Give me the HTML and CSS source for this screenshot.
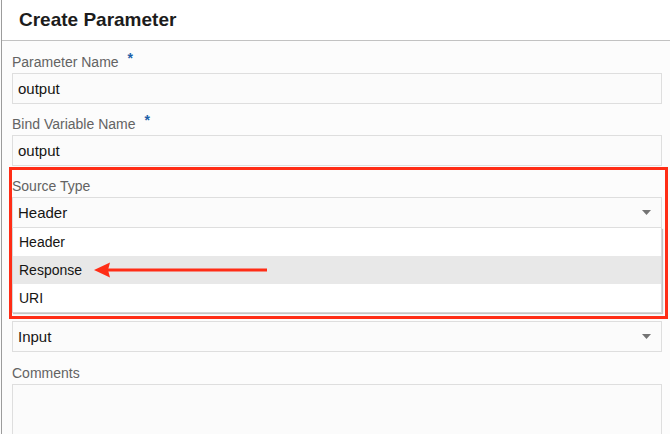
FILE: index.html
```html
<!DOCTYPE html>
<html>
<head>
<meta charset="utf-8">
<link rel="stylesheet" href="styles.css">
</head>
<body>
<div class="dialog">
  <div class="header"><h1 class="title">Create Parameter</h1></div>
  <div class="form">
    <div class="field">
      <div class="label">Parameter Name<span class="req">*</span></div>
      <div class="input">output</div>
    </div>
    <div class="field">
      <div class="label">Bind Variable Name<span class="req">*</span></div>
      <div class="input">output</div>
    </div>
    <div class="field field-open">
      <div class="label">Source Type</div>
      <div class="input select">
        <span>Header</span>
        <svg class="caret" width="9" height="5" viewBox="0 0 9 5"><polygon points="0,0 9,0 4.5,5" fill="#747474"/></svg>
      </div>
      <ul class="listbox">
        <li class="option">Header</li>
        <li class="option option-active">Response</li>
        <li class="option">URI</li>
      </ul>
    </div>
    <div class="field field-after">
      <div class="input select">
        <span>Input</span>
        <svg class="caret" width="9" height="5" viewBox="0 0 9 5"><polygon points="0,0 9,0 4.5,5" fill="#747474"/></svg>
      </div>
    </div>
    <div class="field">
      <div class="label">Comments</div>
      <div class="input textarea"></div>
    </div>
  </div>
  <div class="highlight"></div>
  <svg class="arrow" width="190" height="24" viewBox="0 0 190 24">
    <line x1="16" y1="10" x2="177" y2="10" stroke="#ff2d16" stroke-width="3"/>
    <polygon points="4,10 20,2.5 18,10 20,17.5" fill="#ff2d16"/>
  </svg>
</div>
</body>
</html>
```
FILE: styles.css
```css
* { box-sizing: border-box; }
html, body { margin: 0; padding: 0; }
body {
  background: #fcfcfc;
  font-family: "Liberation Sans", Arial, sans-serif;
  color: #161513;
  overflow: hidden;
}
.dialog {
  position: relative;
  width: 669px;
  height: 434px;
  margin-left: 1px;
  border-left: 1px solid #9c9c9c;
  background: #fcfcfc;
  overflow: hidden;
}
.header {
  height: 41px;
  background: #ffffff;
  border-bottom: 1px solid #c2c2c2;
  padding-left: 17px;
}
.title {
  margin: 0;
  font-size: 19px;
  line-height: 40px;
  font-weight: bold;
  color: #1c1c1c;
}
.form {
  padding: 10px 8px 0 10px;
}
.field { margin-bottom: 9px; }
.label {
  font-size: 14px;
  line-height: 22px;
  height: 22px;
  color: #636363;
}
.req {
  color: #1b5fa8;
  font-weight: bold;
  font-size: 14px;
  margin-left: 9px;
  position: relative;
  top: -4px;
}
.input {
  height: 31px;
  border: 1px solid #dedede;
  background: #fbfbfb;
  padding: 0 10px 0 5px;
  font-size: 15px;
  line-height: 29px;
  color: #161513;
}
.select {
  display: flex;
  align-items: center;
  justify-content: space-between;
}
.caret { display: block; flex: none; }
.field-open { margin-bottom: 8px; }
.field-after { margin-bottom: 10px; }
.listbox {
  list-style: none;
  margin: 0;
  padding: 0;
  background: #ffffff;
  border: 1px solid #d6d6d6;
  border-top: none;
  box-shadow: 1px 1px 1px rgba(0,0,0,0.22);
  margin-bottom: 2px;
}
.option {
  height: 28px;
  line-height: 28px;
  padding-left: 6px;
  font-size: 14px;
  color: #161513;
}
.option-active { background: #e8e8e8; }
.textarea { height: 70px; }
.highlight {
  position: absolute;
  left: 7px;
  top: 167px;
  width: 659px;
  height: 152px;
  border: 3px solid #ff2d16;
}
.arrow {
  position: absolute;
  left: 88px;
  top: 260px;
}
```
